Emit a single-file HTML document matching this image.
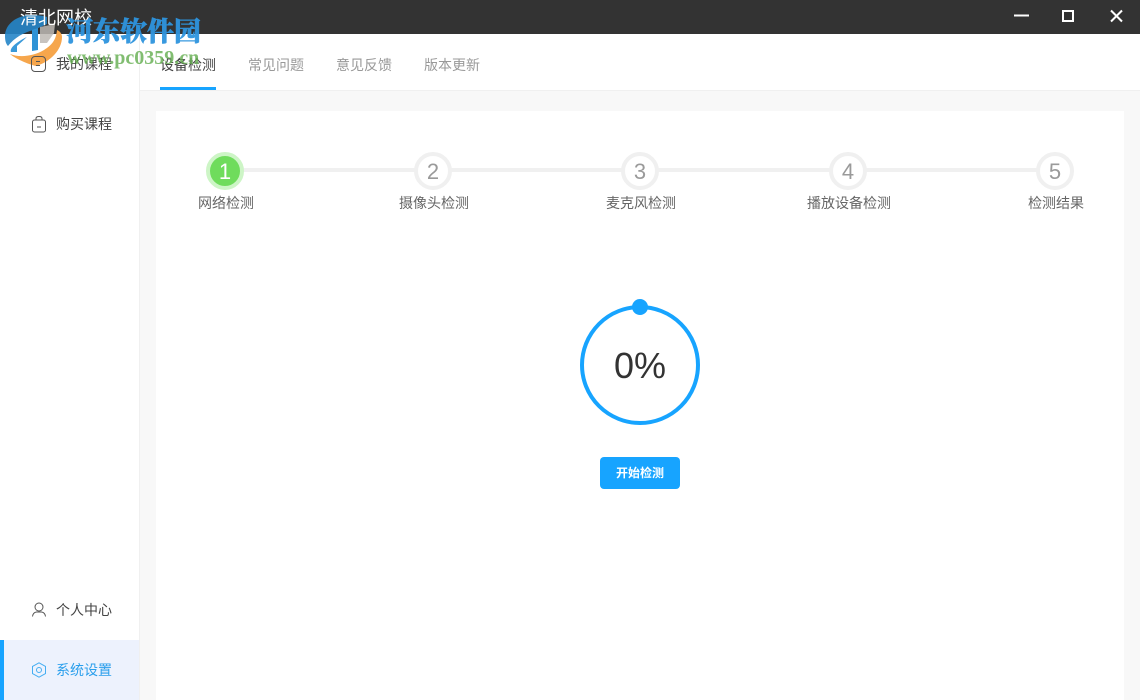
<!DOCTYPE html>
<html lang="zh"><head><meta charset="utf-8"><title>清北网校</title>
<style>
*{margin:0;padding:0;box-sizing:border-box}
html,body{width:1140px;height:700px;overflow:hidden;background:#f8f8f8}
body{position:relative;font-family:"Liberation Sans","Noto Sans CJK SC",sans-serif;color:#444}
.a{position:absolute;white-space:nowrap}
.t{font-size:14px;line-height:20px}
.num{position:absolute;width:38px;height:38px;border-radius:50%;background:#fff;border:4px solid #f0f0f0;color:#9a9a9a;font-size:22px;line-height:32px;text-align:center;top:152px}
</style></head><body>
<div class="a" style="left:0;top:0;width:1140px;height:34px;background:#333"></div>
<svg class="a" style="left:1000px;top:0" width="140" height="34" fill="none" stroke="#fff" stroke-width="2">
<path d="M14 15.500H29"/><rect x="63" y="11" width="10" height="10"/><path d="M111 10.500L122 21.500M122 10.500L111 21.500"/></svg>

<div class="a" style="left:0;top:34px;width:140px;height:666px;background:#fff;border-right:1px solid #f0f0f0"></div>
<div class="a" style="left:0;top:640px;width:139px;height:60px;background:#edf2fd"></div>
<div class="a" style="left:0;top:640px;width:4px;height:60px;background:#17a4ff"></div>
<div class="a" style="left:140px;top:34px;width:1000px;height:57px;background:#fff;border-bottom:1px solid #f0f0f0"></div>
<div class="a" style="left:156px;top:111px;width:968px;height:589px;background:#fff"></div>

<svg class="a" style="left:0;top:0" width="70" height="72">
<path d="M32 15C17 15 5 24 5 36C5 41 6 44 8 46C14 38 24 32 34 30L47 24L47 17C42 15.500 37 15 32 15Z" fill="#2585c8" opacity=".9"/>
<path d="M11 52C9 48 18 41 27 37L17 47L17 52Z" fill="#3b9ad9"/>
<path d="M17 52V46L27 37H31V52Z" fill="#fff"/>
<path d="M32 30L38 28V50L32 51Z" fill="#2f93d6"/>
<path d="M40 27L55 24L54 33L47 43H40Z" fill="#bdb9b4" opacity=".85"/>
<path d="M62 37C62 50 50 62 36 66C31 65 17 60 10 54C20 58 34 56 44 50C52 45 56 40 57 30C60 31 62 34 62 37Z" fill="#f6a64c"/>
</svg>
<div class="a" style="left:20px;top:6px;font-size:18px;line-height:24px;color:#fff">清北网校</div>
<svg class="a" style="left:30px;top:55px" width="18" height="18" fill="none" stroke="#555" stroke-width="1"><rect x="1.500" y="1.500" width="14" height="15" rx="3.500"/><path d="M6 6.500H10M6 10.500H10"/></svg>
<div class="a t" style="left:56px;top:54px">我的课程</div>
<svg class="a" style="left:30px;top:115px" width="18" height="18" fill="none" stroke="#555" stroke-width="1"><rect x="2.500" y="5" width="13" height="12" rx="2"/><path d="M6 5V3.500Q6 1.500 9 1.500T12 3.500V5M7 12H11"/></svg>
<div class="a t" style="left:56px;top:114px">购买课程</div>
<svg class="a" style="left:30px;top:601px" width="18" height="18" fill="none" stroke="#555" stroke-width="1"><circle cx="9" cy="6" r="4"/><path d="M2.500 15.500Q3 11.500 6.500 11H11.500Q15 11.500 15.500 15.500"/></svg>
<div class="a t" style="left:56px;top:600px">个人中心</div>
<svg class="a" style="left:30px;top:661px" width="18" height="18" fill="none" stroke="#45aef2" stroke-width="1"><path d="M9 1.800L15.500 5.400V12.600L9 16.200L2.500 12.600V5.400Z"/><circle cx="9" cy="9" r="2.500"/></svg>
<div class="a t" style="left:56px;top:660px;color:#2a9fec">系统设置</div>

<div class="a t" style="left:160px;top:55px">设备检测</div>
<div class="a" style="left:160px;top:87px;width:56px;height:3px;background:#17a4ff"></div>
<div class="a t" style="left:248px;top:55px;color:#999">常见问题</div>
<div class="a t" style="left:336px;top:55px;color:#999">意见反馈</div>
<div class="a t" style="left:424px;top:55px;color:#999">版本更新</div>

<div class="a" style="left:225px;top:168px;width:830px;height:4px;background:#f0f0f0"></div>
<div class="num" style="left:206px;background:#6fdc5c;border-color:#cdf5c6;color:#fff">1</div>
<div class="num" style="left:414px">2</div>
<div class="num" style="left:621px">3</div>
<div class="num" style="left:829px">4</div>
<div class="num" style="left:1036px">5</div>
<div class="a t" style="left:198px;top:193px;color:#666">网络检测</div>
<div class="a t" style="left:399px;top:193px;color:#666">摄像头检测</div>
<div class="a t" style="left:606px;top:193px;color:#666">麦克风检测</div>
<div class="a t" style="left:807px;top:193px;color:#666">播放设备检测</div>
<div class="a t" style="left:1028px;top:193px;color:#666">检测结果</div>

<svg class="a" style="left:570px;top:295px" width="140" height="140" fill="none"><circle cx="70" cy="70" r="58" stroke="#17a4ff" stroke-width="4"/><circle cx="70" cy="12" r="8" fill="#17a4ff"/></svg>
<div class="a" style="left:570px;top:343px;width:140px;text-align:center;font-size:36px;line-height:46px;color:#333">0%</div>
<div class="a" style="left:600px;top:457px;width:80px;height:32px;border-radius:4px;background:#17a4ff;color:#fff;font-size:12px;font-weight:bold;line-height:32px;text-align:center">开始检测</div>

<div class="a" style="left:66px;top:13px;font-family:'Noto Serif CJK SC',serif;font-size:27px;line-height:34px;font-weight:900;color:#2e94de;opacity:.95;-webkit-text-stroke:.5px #2e94de">河东软件园</div>
<div class="a" style="left:67px;top:48px;font-family:'Liberation Serif',serif;font-size:20px;line-height:20px;font-weight:bold;color:#62ad4e;opacity:.8">www.pc0359.cn</div>
</body></html>
